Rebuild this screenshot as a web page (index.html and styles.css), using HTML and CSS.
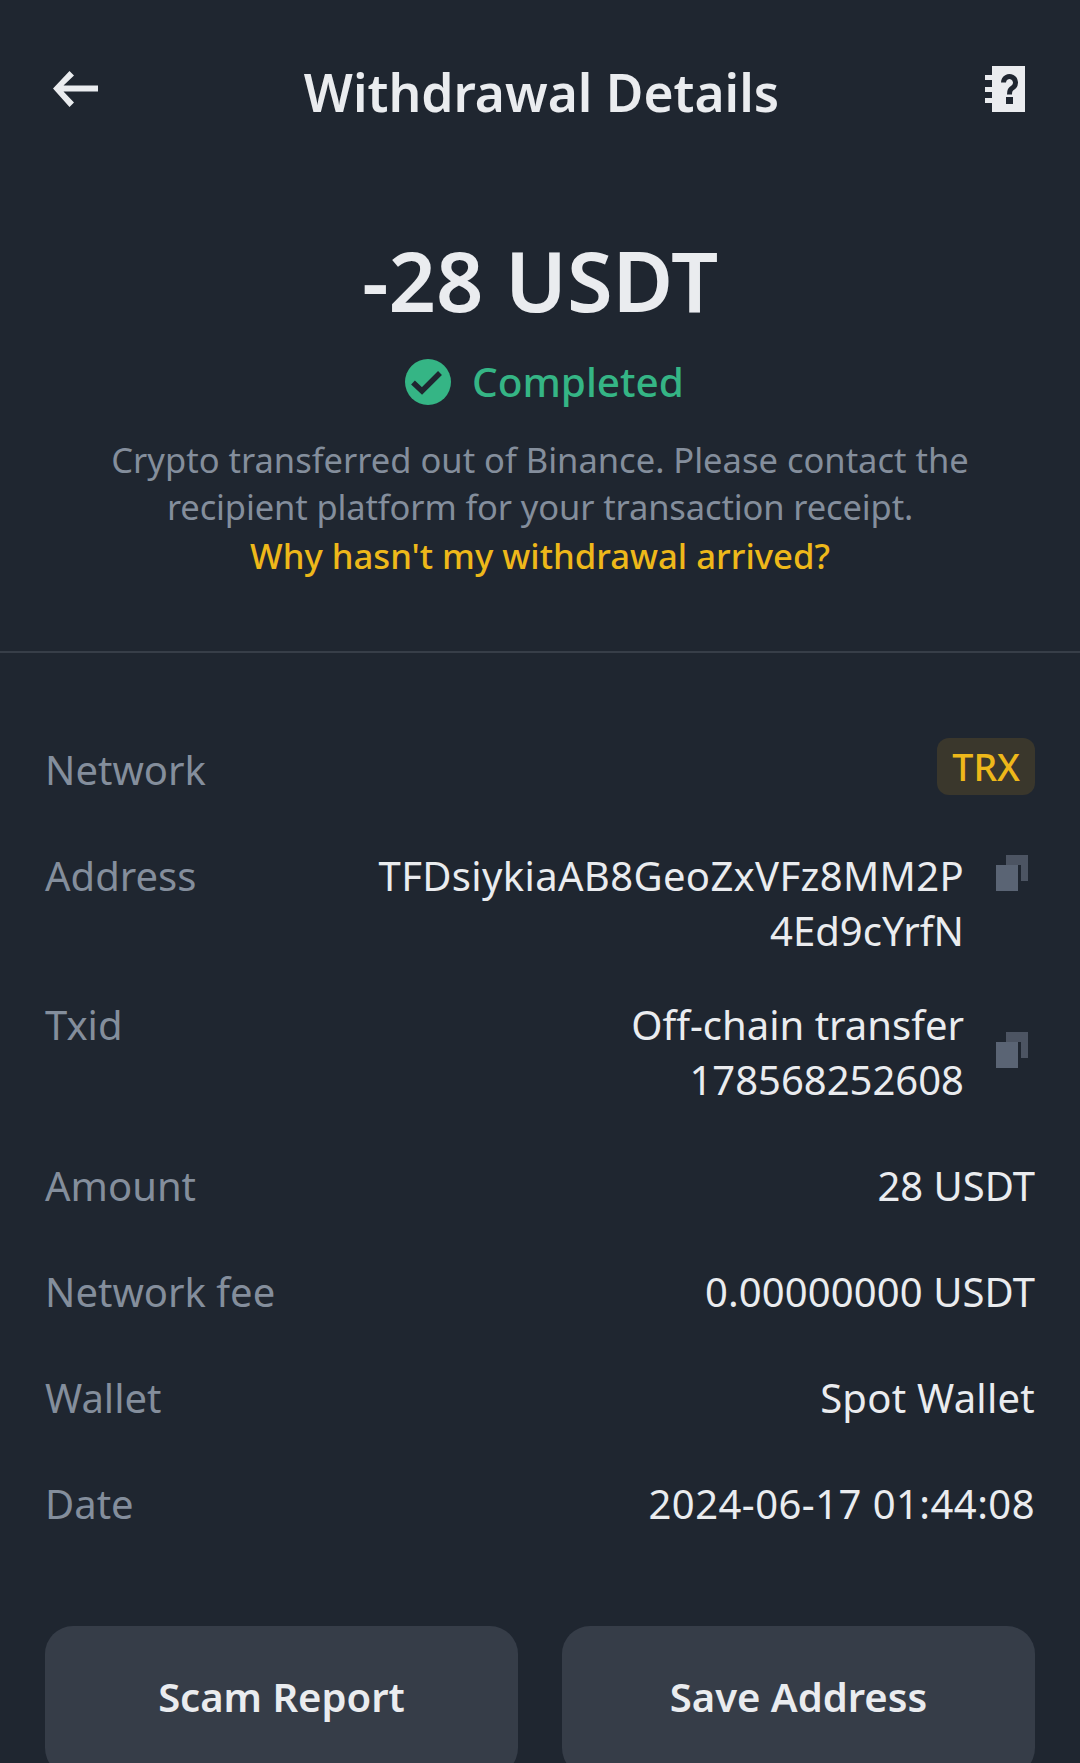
FILE: index.html
```html
<!DOCTYPE html>
<html lang="en">
<head>
<meta charset="utf-8">
<title>Withdrawal Details</title>
<link rel="stylesheet" href="styles.css">
</head>
<body>
<div class="page">
  <header class="topbar">
    <svg class="icon-back" viewBox="0 0 45 38" width="45" height="38"><path d="M0 18.500L16.500 1l4.500 4.500-10.500 10H45v6H10.500L21 32.500 16.500 37z" fill="#eaecef"/></svg>
    <h1 class="title">Withdrawal Details</h1>
    <svg class="icon-help" viewBox="0 0 40 46" width="40" height="46">
      <path d="M7 0h33v46H7zM0 9h7v5H0zM0 21h7v5H0zM0 32h7v5H0z" fill="#eaecef"/>
      <path d="M18.500 16.500a6 6 0 1 1 9.500 5c-2.800 2-3.500 3-3.500 7" fill="none" stroke="#1f2630" stroke-width="5"/>
      <path d="M21 31h7v7h-7z" fill="#1f2630"/>
    </svg>
  </header>

  <section class="summary">
    <div class="amount">-28 USDT</div>
    <div class="status">
      <svg viewBox="0 0 46 46" width="46" height="46"><circle cx="23" cy="23" r="23" fill="#35b585"/><path d="M8 23.500l9 8.500 18-18" fill="none" stroke="#1f2630" stroke-width="5.500"/></svg>
      <span>Completed</span>
    </div>
    <p class="note">Crypto transferred out of Binance. Please contact the<br><span class="note-tight">recipient platform for your transaction receipt.</span></p>
    <a class="why">Why hasn't my withdrawal arrived?</a>
  </section>

  <section class="details">
    <div class="row row-network">
      <span class="label">Network</span>
      <span class="tag">TRX</span>
    </div>
    <div class="row row-multi">
      <span class="label">Address</span>
      <div class="value-copy">
        <span class="value"><span class="value-address">TFDsiykiaAB8GeoZxVFz8MM2P</span><br>4Ed9cYrfN</span>
        <svg class="copy" viewBox="0 0 32 36" width="32" height="36"><path d="M10 0h22v26h-7V10H10z" fill="#4c5462"/><path d="M0 10h22v26H0z" fill="#5a6474"/></svg>
      </div>
    </div>
    <div class="row row-multi row-txid">
      <span class="label">Txid</span>
      <div class="value-copy">
        <span class="value">Off-chain transfer<br>178568252608</span>
        <svg class="copy copy-mid" viewBox="0 0 32 36" width="32" height="36"><path d="M10 0h22v26h-7V10H10z" fill="#4c5462"/><path d="M0 10h22v26H0z" fill="#5a6474"/></svg>
      </div>
    </div>
    <div class="row"><span class="label">Amount</span><span class="value">28 USDT</span></div>
    <div class="row"><span class="label">Network fee</span><span class="value value-fee">0.00000000 USDT</span></div>
    <div class="row"><span class="label">Wallet</span><span class="value value-wallet">Spot Wallet</span></div>
    <div class="row"><span class="label">Date</span><span class="value value-date">2024-06-17 01:44:08</span></div>
  </section>

  <footer class="actions">
    <button class="btn">Scam Report</button>
    <button class="btn">Save Address</button>
  </footer>
</div>
</body>
</html>
```
FILE: styles.css
```css
* { box-sizing: border-box; }
html, body { margin: 0; padding: 0; }
body { background: #1f2630; font-family: "Noto Sans", "Open Sans", sans-serif; color: #eaecef; }

.page { width: 1080px; height: 1763px; overflow: hidden; display: flex; flex-direction: column; }

.topbar { height: 186px; padding: 0 55px 14px 53px; display: flex; align-items: center; justify-content: space-between; }
.title { margin: 0; font-size: 51.500px; line-height: 60px; font-weight: 600; padding-top: 12px; }
.icon-help, .icon-back { margin-top: 6px; flex: none; }

.summary { height: 467px; border-bottom: 2px solid #373e48; display: flex; flex-direction: column; align-items: center; }
.amount { font-size: 83px; line-height: 90px; font-weight: 600; margin-top: 49px; }
.status { display: flex; align-items: center; gap: 21px; margin: 30px 0 0 9px; color: #35b585; font-size: 40.500px; line-height: 54px; font-weight: 500; }
.note { margin: 27px 0 0; text-align: center; font-size: 34.500px; line-height: 47px; color: #848e9c; }
.note-tight { letter-spacing: -0.130px; }
.why { margin-top: 1px; font-size: 34.700px; line-height: 50px; font-weight: 500; color: #eeb81a; }

.details { flex: 1; padding: 0 45px; }
.row { display: flex; justify-content: space-between; align-items: center; height: 106px; font-size: 40px; }
.row-network { margin-top: 63px; }
.row-multi { align-items: flex-start; height: auto; padding-top: 26px; }
.row-txid { padding-top: 39px; margin-bottom: 25px; }
.label { color: #848e9c; line-height: 55px; }
.value { color: #eaecef; text-align: right; line-height: 55px; }
.value-address { letter-spacing: 0.350px; }
.value-fee { letter-spacing: 0.100px; }
.value-wallet { letter-spacing: 0.250px; }
.value-date { letter-spacing: 0.450px; }
.value-copy { display: flex; gap: 32px; align-items: flex-start; padding-right: 7px; }
.copy { margin-top: 7px; flex: none; }
.copy-mid { margin-top: 35px; }
.tag { background: #3a372c; color: #eeb81a; font-size: 37.500px; line-height: 57px; padding: 0 15px; margin-bottom: 6px; border-radius: 12px; font-weight: 500; }

.actions { display: flex; justify-content: space-between; padding: 0 45px; height: 137px; flex: none; }
.btn { width: 473px; height: 150px; border: 0; border-radius: 28px; background: #363d48; color: #eaecef; font: 600 40px/54px "Noto Sans", sans-serif; padding-bottom: 9px; }
```
